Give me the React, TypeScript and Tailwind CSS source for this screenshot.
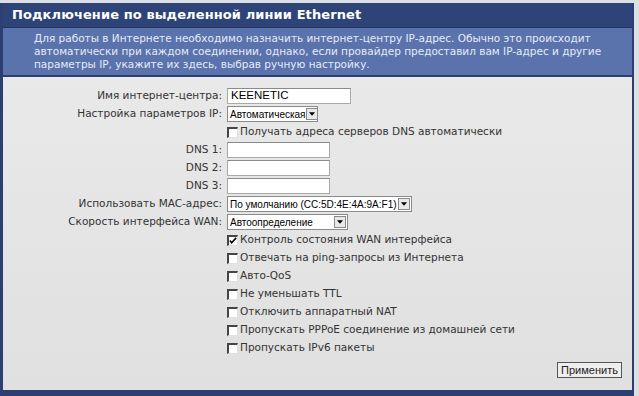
import React from "react";

const Box = ({ checked }: { checked?: boolean }) => (
  <span className="relative inline-block w-[11px] h-[11px] bg-white border-t-2 border-l-2 border-[#454545] border-r border-b border-r-[#e0e0e0] border-b-[#e0e0e0] shrink-0">
    {checked && (
      <svg viewBox="0 0 9 9" className="absolute left-0 top-0 w-[8px] h-[8px]">
        <path d="M1 4 L3 6.5 L8 1" stroke="#000" strokeWidth="1.8" fill="none" />
      </svg>
    )}
  </span>
);

const Arrow = () => (
  <span className="flex items-center justify-center w-[12px] h-[12px] bg-[#e8e8e8] border border-[#8a8a8a] ml-auto shrink-0">
    <svg viewBox="0 0 7 4" className="w-[6px] h-[4px]">
      <path d="M0 0 H7 L3.5 4 Z" fill="#000" />
    </svg>
  </span>
);

const Select = ({ text, w }: { text: string; w: string }) => (
  <div className={`flex items-center h-[16px] bg-white border border-[#8a8a8a] pl-[2px] pr-[1px] overflow-hidden ${w}`}>
    <span className="text-[10px] text-black whitespace-nowrap font-['Liberation_Sans',sans-serif]">{text}</span>
    <Arrow />
  </div>
);

const Input = ({ value, w }: { value?: string; w: string }) => (
  <div className={`flex items-center h-[16px] bg-white border border-[#a9a9a9] border-t-[#8a8a8a] pl-[3px] ${w}`}>
    <span className="text-[11.5px] text-black font-['Liberation_Sans',sans-serif]">{value}</span>
  </div>
);

const Row = ({ label, children }: { label?: string; children: React.ReactNode }) => (
  <div className="flex items-center h-[18px]">
    <div className="w-[224px] pr-[5px] text-right whitespace-nowrap text-[#333]">{label}</div>
    <div className="flex items-center">{children}</div>
  </div>
);

const Check = ({ text, checked }: { text: string; checked?: boolean }) => (
  <Row>
    <div className="flex items-center gap-[2px]">
      <Box checked={checked} />
      <span className="text-[#333]">{text}</span>
    </div>
  </Row>
);

export default function App() {
  return (
    <div className="w-[639px] h-[396px] bg-[#dcdfe4] pt-[3px] font-['DejaVu_Sans',sans-serif] text-[10.5px]">
      <div className="w-[634px] h-[393px] flex flex-col border-l-[3px] border-r-2 border-[#2c3f70]">
        <div className="h-[25px] bg-[#2e4479] border-b border-[#22335d] flex items-center pl-[9px]">
          <h1 className="text-white font-bold text-[13px] tracking-[0.1px]">
            Подключение по выделенной линии Ethernet
          </h1>
        </div>
        <div className="h-[49px] bg-[#5a73ad] border-b-2 border-[#2c3f70] pl-[31px] pt-[4px] text-[#e6ebf5] leading-[13px]">
          <p>Для работы в Интернете необходимо назначить интернет-центру IP-адрес. Обычно это происходит</p>
          <p>автоматически при каждом соединении, однако, если провайдер предоставил вам IP-адрес и другие</p>
          <p>параметры IP, укажите их здесь, выбрав ручную настройку.</p>
        </div>
        <div className="flex-1 flex flex-col bg-gradient-to-b from-[#e9e9e9] to-[#e0e0e0] border-b-[6px] border-[#2c3f70] pt-[10px]">
          <Row label="Имя интернет-центра:">
            <Input value="KEENETIC" w="w-[124px]" />
          </Row>
          <Row label="Настройка параметров IP:">
            <Select text="Автоматическая" w="w-[91px]" />
          </Row>
          <Check text="Получать адреса серверов DNS автоматически" />
          <Row label="DNS 1:">
            <Input w="w-[103px]" />
          </Row>
          <Row label="DNS 2:">
            <Input w="w-[103px]" />
          </Row>
          <Row label="DNS 3:">
            <Input w="w-[103px]" />
          </Row>
          <Row label="Использовать MAC-адрес:">
            <Select text="По умолчанию (CC:5D:4E:4A:9A:F1)" w="w-[185px]" />
          </Row>
          <Row label="Скорость интерфейса WAN:">
            <Select text="Автоопределение" w="w-[121px]" />
          </Row>
          <Check text="Контроль состояния WAN интерфейса" checked />
          <Check text="Отвечать на ping-запросы из Интернета" />
          <Check text="Авто-QoS" />
          <Check text="Не уменьшать TTL" />
          <Check text="Отключить аппаратный NAT" />
          <Check text="Пропускать PPPoE соединение из домашней сети" />
          <Check text="Пропускать IPv6 пакеты" />
          <div className="flex justify-end pr-[10px] mt-[5px]">
            <button className="h-[16px] w-[65px] border border-[#555] bg-[#eeeeee] text-[11px] text-[#222] font-['Liberation_Sans',sans-serif] leading-none">
              Применить
            </button>
          </div>
        </div>
      </div>
    </div>
  );
}
